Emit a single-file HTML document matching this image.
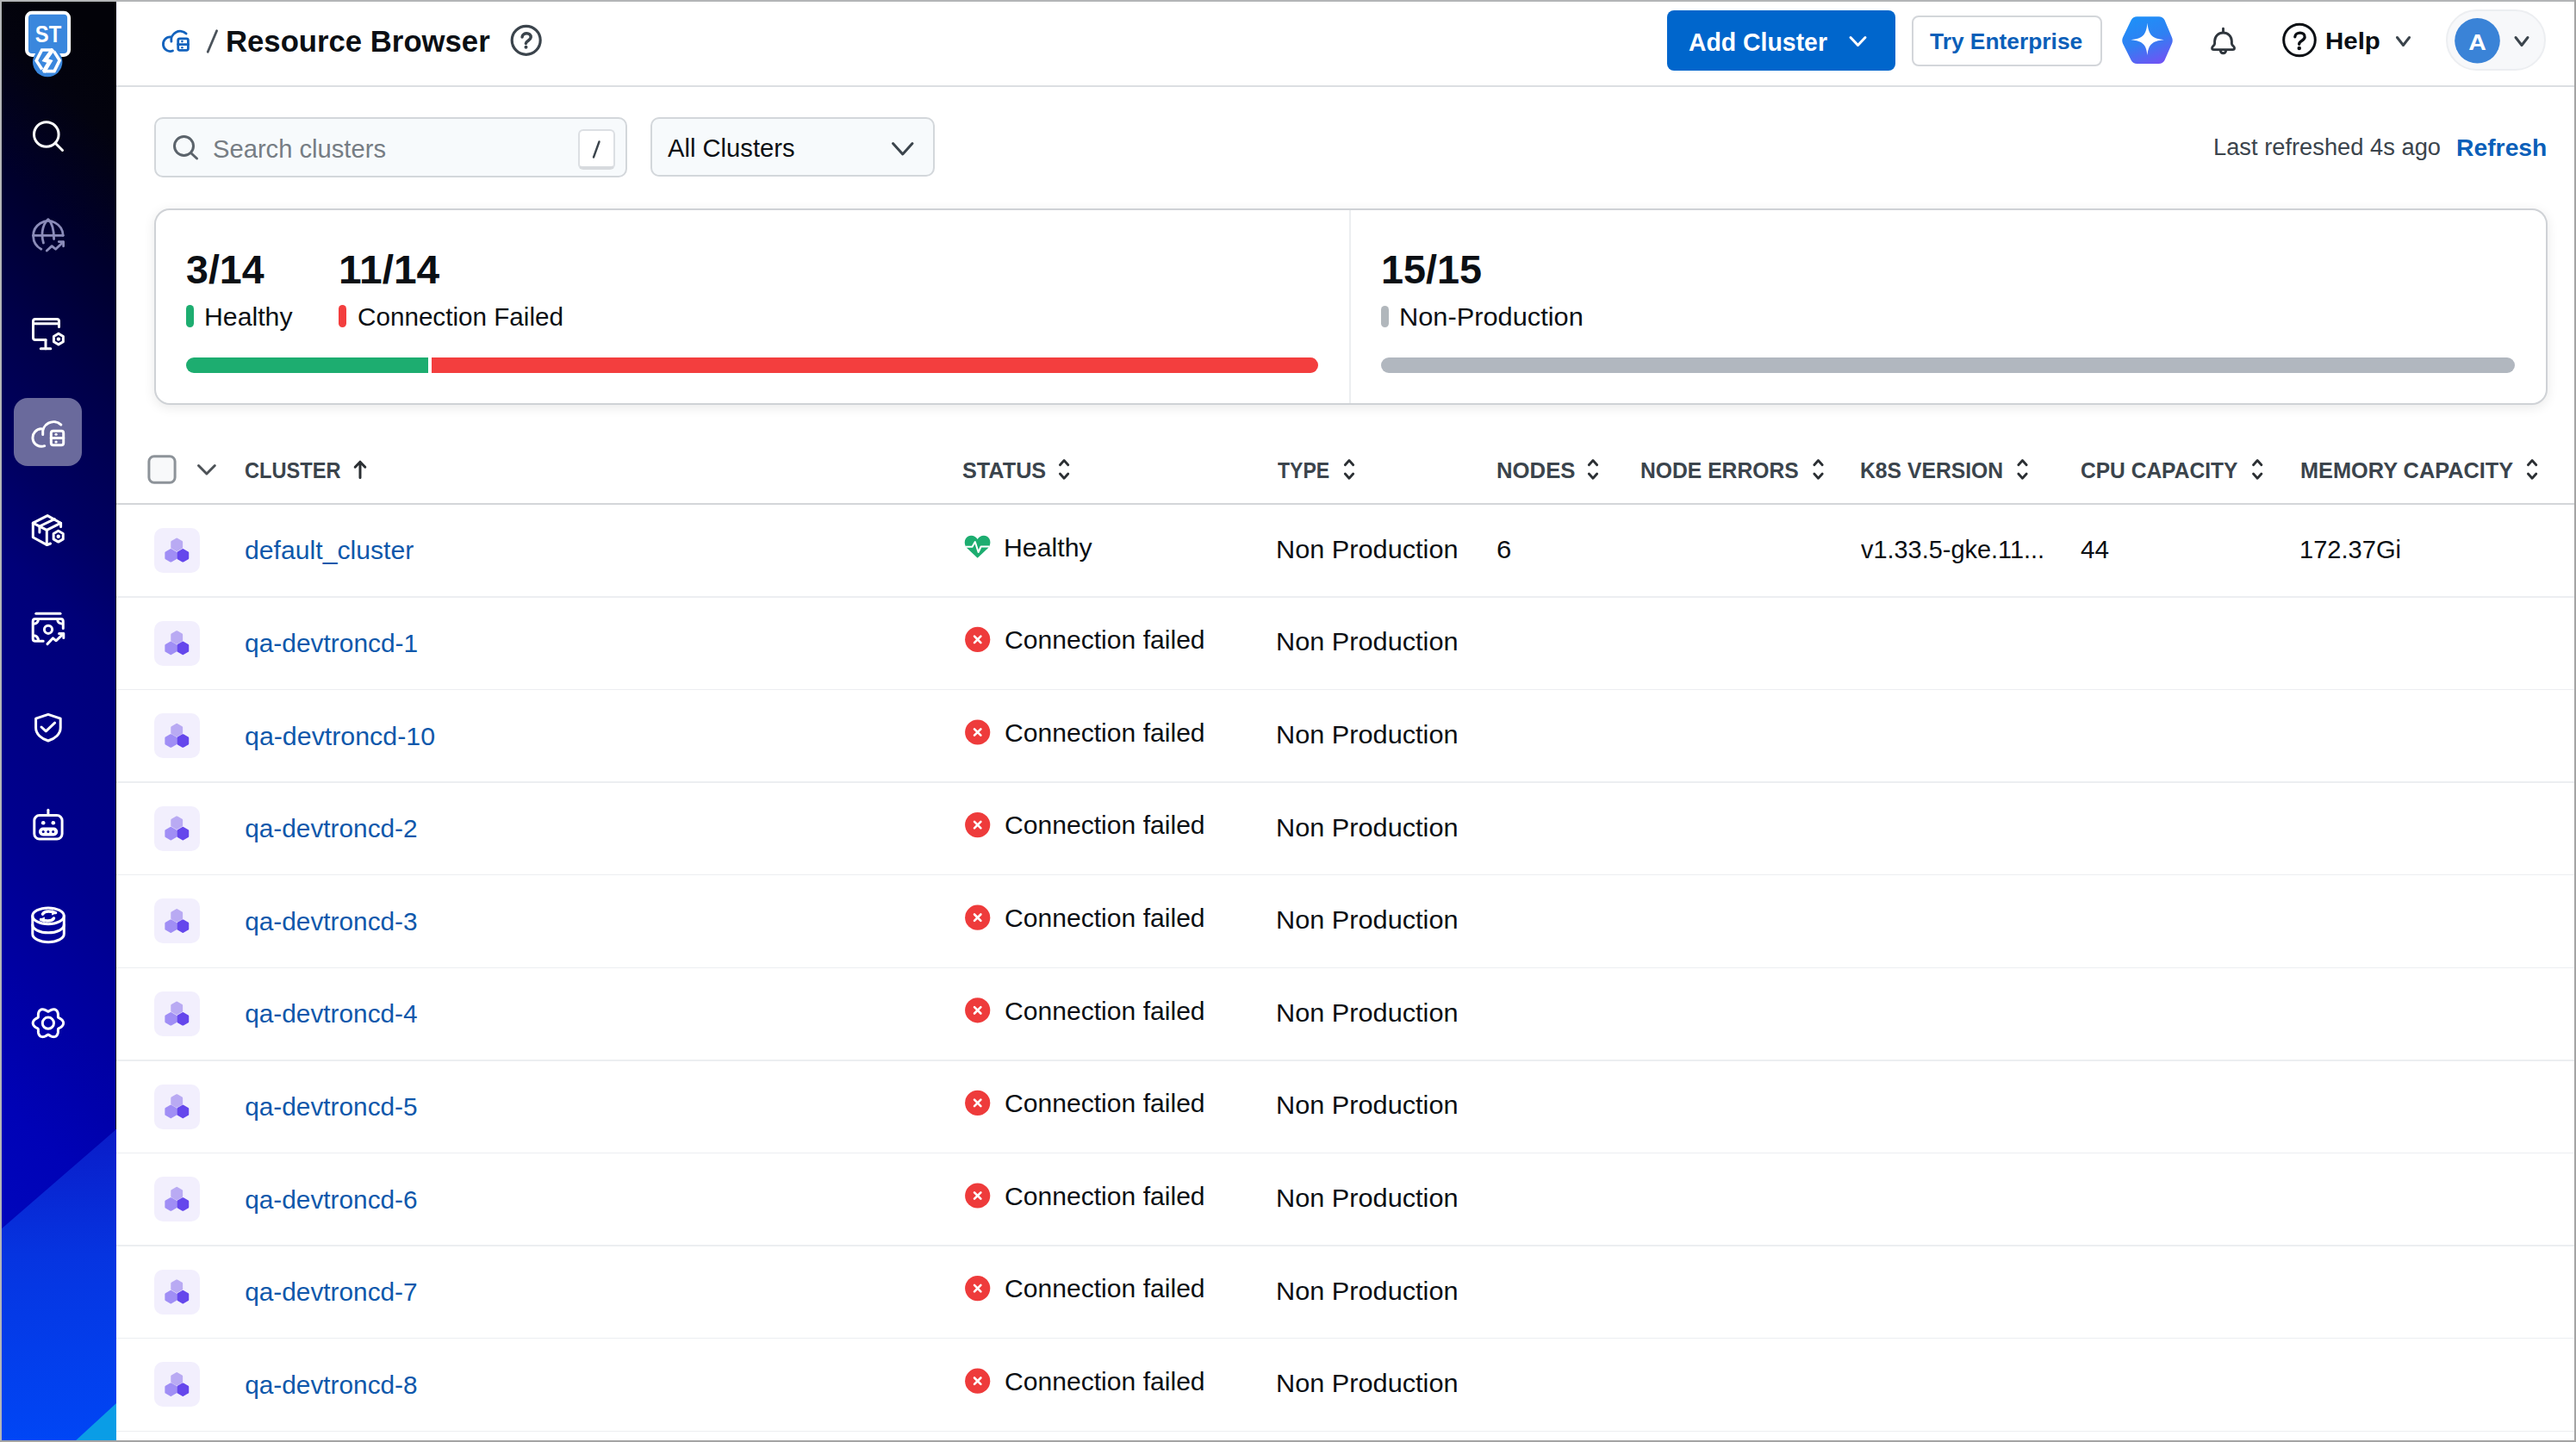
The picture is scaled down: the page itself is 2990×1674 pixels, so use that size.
<!DOCTYPE html>
<html><head><meta charset="utf-8"><title>Resource Browser</title><style>
html,body{margin:0;padding:0;}
body{width:2990px;height:1674px;overflow:hidden;background:#fff;position:relative;font-family:"Liberation Sans",sans-serif;}
.t{position:absolute;white-space:nowrap;line-height:1;transform-origin:0 0;}
.b{position:absolute;box-sizing:border-box;}
svg.ov{position:absolute;left:0;top:0;}
</style></head><body>
<div class="b" style="left:135px;top:0px;width:2855px;height:99px;background:#fff"></div>
<div class="b" style="left:135px;top:99px;width:2855px;height:2px;background:#dcdfe2"></div>
<div class="t" style="left:262.04px;top:31.23px;font-size:35.4px;color:#0b0f14;font-weight:bold;transform:scaleX(0.9806);">Resource Browser</div>
<div class="b" style="left:1935px;top:12px;width:265px;height:70px;background:#0066cc;border-radius:8px"></div>
<div class="t" style="left:1960.05px;top:33.60px;font-size:30px;color:#ffffff;font-weight:bold;transform:scaleX(0.9467);">Add Cluster</div>
<div class="b" style="left:2219px;top:18px;width:221px;height:59px;background:#fff;border:2px solid #d3d6da;border-radius:8px"></div>
<div class="t" style="left:2240.00px;top:34.56px;font-size:26.5px;color:#0b5fb9;font-weight:bold;transform:scaleX(0.9944);">Try Enterprise</div>
<div class="t" style="left:2698.93px;top:33.47px;font-size:28.5px;color:#0b0f14;font-weight:bold;transform:scaleX(1.0339);">Help</div>
<div class="b" style="left:2839px;top:11px;width:116px;height:71px;background:#f7f8fa;border:2px solid #eceef1;border-radius:36px"></div>
<div class="b" style="left:179px;top:136px;width:549px;height:70px;background:#f7fafc;border:2px solid #d3d7db;border-radius:10px"></div>
<div class="t" style="left:246.72px;top:157.75px;font-size:29.7px;color:#767d84;transform:scaleX(0.9823);">Search clusters</div>
<div class="b" style="left:671px;top:150px;width:43px;height:47px;background:#fff;border:2px solid #dcdfe3;border-bottom:4px solid #d7dade;border-radius:6px"></div>
<div class="b" style="left:755px;top:136px;width:330px;height:69px;background:#f7fafc;border:2px solid #d3d7db;border-radius:10px"></div>
<div class="t" style="left:775.00px;top:156.55px;font-size:29.7px;color:#0b0f14;transform:scaleX(0.9826);">All Clusters</div>
<div class="t" style="left:2568.58px;top:158.14px;font-size:27px;color:#3b444c;transform:scaleX(1.0109);">Last refreshed 4s ago</div>
<div class="t" style="left:2850.71px;top:157.37px;font-size:28.5px;color:#0b5fb9;font-weight:bold;transform:scaleX(0.9932);">Refresh</div>
<div class="b" style="left:179px;top:242px;width:2778px;height:228px;background:#fff;border:2px solid #cfd2d6;border-radius:18px;box-shadow:0 3px 14px rgba(0,0,0,0.09)"></div>
<div class="b" style="left:1566px;top:244px;width:2px;height:224px;background:#eceef0"></div>
<div class="t" style="left:215.98px;top:290.88px;font-size:45.5px;color:#0b0f14;font-weight:bold;transform:scaleX(1.0227);">3/14</div>
<div class="t" style="left:392.54px;top:290.88px;font-size:45.5px;color:#0b0f14;font-weight:bold;transform:scaleX(1.0528);">11/14</div>
<div class="t" style="left:1602.52px;top:290.78px;font-size:45.5px;color:#0b0f14;font-weight:bold;transform:scaleX(1.0282);">15/15</div>
<div class="b" style="left:216px;top:354px;width:9px;height:26px;background:#1dad70;border-radius:5px"></div>
<div class="b" style="left:393px;top:354px;width:9px;height:26px;background:#f33e3e;border-radius:5px"></div>
<div class="b" style="left:1603px;top:355px;width:9px;height:25px;background:#b1b7bc;border-radius:5px"></div>
<div class="t" style="left:236.98px;top:353.30px;font-size:30px;color:#0b0f14;transform:scaleX(1.0080);">Healthy</div>
<div class="t" style="left:414.81px;top:353.30px;font-size:30px;color:#0b0f14;transform:scaleX(0.9883);">Connection Failed</div>
<div class="t" style="left:1623.95px;top:352.80px;font-size:30px;color:#0b0f14;transform:scaleX(1.0259);">Non-Production</div>
<div class="b" style="left:216px;top:415px;width:281px;height:18px;background:#1dad70;border-radius:9px 0 0 9px"></div>
<div class="b" style="left:501px;top:415px;width:1029px;height:18px;background:#f33e3e;border-radius:0 9px 9px 0"></div>
<div class="b" style="left:1603px;top:415px;width:1316px;height:18px;background:#b1b7bf;border-radius:9px"></div>
<div class="t" style="left:284.27px;top:533.81px;font-size:25.5px;color:#3b444c;font-weight:bold;transform:scaleX(0.9261);">CLUSTER</div>
<div class="t" style="left:1116.51px;top:533.81px;font-size:25.5px;color:#3b444c;font-weight:bold;transform:scaleX(0.9896);">STATUS</div>
<div class="t" style="left:1483.30px;top:533.81px;font-size:25.5px;color:#3b444c;font-weight:bold;transform:scaleX(0.9045);">TYPE</div>
<div class="t" style="left:1736.68px;top:533.81px;font-size:25.5px;color:#3b444c;font-weight:bold;transform:scaleX(1.0091);">NODES</div>
<div class="t" style="left:1903.97px;top:533.81px;font-size:25.5px;color:#3b444c;font-weight:bold;transform:scaleX(0.9674);">NODE ERRORS</div>
<div class="t" style="left:2159.06px;top:533.81px;font-size:25.5px;color:#3b444c;font-weight:bold;transform:scaleX(0.9690);">K8S VERSION</div>
<div class="t" style="left:2415.44px;top:533.81px;font-size:25.5px;color:#3b444c;font-weight:bold;transform:scaleX(0.9628);">CPU CAPACITY</div>
<div class="t" style="left:2669.91px;top:533.81px;font-size:25.5px;color:#3b444c;font-weight:bold;transform:scaleX(0.9931);">MEMORY CAPACITY</div>
<div class="b" style="left:135px;top:584px;width:2853px;height:2px;background:#d3d6d9"></div>
<div class="b" style="left:135px;top:692.1px;width:2853px;height:1.5px;background:#eceef1"></div>
<div class="b" style="left:179px;top:613.0px;width:52.599999999999994px;height:52.0px;background:#f2effd;border-radius:10px"></div>
<div class="t" style="left:284.19px;top:624.37px;font-size:29.8px;color:#0e58ab;transform:scaleX(1.0130);">default_cluster</div>
<div class="t" style="left:1164.78px;top:621.20px;font-size:30px;color:#0b0f14;transform:scaleX(1.0090);">Healthy</div>
<div class="t" style="left:1481.42px;top:622.82px;font-size:29.5px;color:#0b0f14;transform:scaleX(1.0405);">Non Production</div>
<div class="t" style="left:1736.94px;top:622.52px;font-size:29.5px;color:#0b0f14;transform:scaleX(1.0571);">6</div>
<div class="t" style="left:2160.20px;top:622.52px;font-size:29.5px;color:#0b0f14;transform:scaleX(0.9795);">v1.33.5-gke.11...</div>
<div class="t" style="left:2414.99px;top:622.52px;font-size:29.5px;color:#0b0f14;transform:scaleX(1.0065);">44</div>
<div class="t" style="left:2669.43px;top:622.52px;font-size:29.5px;color:#0b0f14;transform:scaleX(0.9853);">172.37Gi</div>
<div class="b" style="left:135px;top:799.7px;width:2853px;height:1.5px;background:#eceef1"></div>
<div class="b" style="left:179px;top:720.6px;width:52.599999999999994px;height:52.0px;background:#f2effd;border-radius:10px"></div>
<div class="t" style="left:284.20px;top:731.97px;font-size:29.8px;color:#0e58ab;transform:scaleX(1.0040);">qa-devtroncd-1</div>
<div class="t" style="left:1166.28px;top:728.22px;font-size:29.5px;color:#0b0f14;transform:scaleX(1.0204);">Connection failed</div>
<div class="t" style="left:1481.42px;top:730.32px;font-size:29.5px;color:#0b0f14;transform:scaleX(1.0405);">Non Production</div>
<div class="b" style="left:135px;top:907.3px;width:2853px;height:1.5px;background:#eceef1"></div>
<div class="b" style="left:179px;top:828.2px;width:52.599999999999994px;height:52.0px;background:#f2effd;border-radius:10px"></div>
<div class="t" style="left:284.18px;top:839.57px;font-size:29.8px;color:#0e58ab;transform:scaleX(1.0186);">qa-devtroncd-10</div>
<div class="t" style="left:1166.28px;top:835.82px;font-size:29.5px;color:#0b0f14;transform:scaleX(1.0204);">Connection failed</div>
<div class="t" style="left:1481.42px;top:837.92px;font-size:29.5px;color:#0b0f14;transform:scaleX(1.0405);">Non Production</div>
<div class="b" style="left:135px;top:1014.9px;width:2853px;height:1.5px;background:#eceef1"></div>
<div class="b" style="left:179px;top:935.8px;width:52.599999999999994px;height:52.0px;background:#f2effd;border-radius:10px"></div>
<div class="t" style="left:284.20px;top:947.17px;font-size:29.8px;color:#0e58ab;">qa-devtroncd-2</div>
<div class="t" style="left:1166.28px;top:943.42px;font-size:29.5px;color:#0b0f14;transform:scaleX(1.0204);">Connection failed</div>
<div class="t" style="left:1481.42px;top:945.52px;font-size:29.5px;color:#0b0f14;transform:scaleX(1.0405);">Non Production</div>
<div class="b" style="left:135px;top:1122.5px;width:2853px;height:1.5px;background:#eceef1"></div>
<div class="b" style="left:179px;top:1043.4px;width:52.599999999999994px;height:52.0px;background:#f2effd;border-radius:10px"></div>
<div class="t" style="left:284.20px;top:1054.77px;font-size:29.8px;color:#0e58ab;">qa-devtroncd-3</div>
<div class="t" style="left:1166.28px;top:1051.02px;font-size:29.5px;color:#0b0f14;transform:scaleX(1.0204);">Connection failed</div>
<div class="t" style="left:1481.42px;top:1053.12px;font-size:29.5px;color:#0b0f14;transform:scaleX(1.0405);">Non Production</div>
<div class="b" style="left:135px;top:1230.1px;width:2853px;height:1.5px;background:#eceef1"></div>
<div class="b" style="left:179px;top:1151.0px;width:52.599999999999994px;height:52.0px;background:#f2effd;border-radius:10px"></div>
<div class="t" style="left:284.20px;top:1162.37px;font-size:29.8px;color:#0e58ab;">qa-devtroncd-4</div>
<div class="t" style="left:1166.28px;top:1158.62px;font-size:29.5px;color:#0b0f14;transform:scaleX(1.0204);">Connection failed</div>
<div class="t" style="left:1481.42px;top:1160.72px;font-size:29.5px;color:#0b0f14;transform:scaleX(1.0405);">Non Production</div>
<div class="b" style="left:135px;top:1337.7px;width:2853px;height:1.5px;background:#eceef1"></div>
<div class="b" style="left:179px;top:1258.6px;width:52.599999999999994px;height:52.0px;background:#f2effd;border-radius:10px"></div>
<div class="t" style="left:284.20px;top:1269.97px;font-size:29.8px;color:#0e58ab;">qa-devtroncd-5</div>
<div class="t" style="left:1166.28px;top:1266.22px;font-size:29.5px;color:#0b0f14;transform:scaleX(1.0204);">Connection failed</div>
<div class="t" style="left:1481.42px;top:1268.32px;font-size:29.5px;color:#0b0f14;transform:scaleX(1.0405);">Non Production</div>
<div class="b" style="left:135px;top:1445.3px;width:2853px;height:1.5px;background:#eceef1"></div>
<div class="b" style="left:179px;top:1366.2px;width:52.599999999999994px;height:52.0px;background:#f2effd;border-radius:10px"></div>
<div class="t" style="left:284.20px;top:1377.57px;font-size:29.8px;color:#0e58ab;">qa-devtroncd-6</div>
<div class="t" style="left:1166.28px;top:1373.82px;font-size:29.5px;color:#0b0f14;transform:scaleX(1.0204);">Connection failed</div>
<div class="t" style="left:1481.42px;top:1375.92px;font-size:29.5px;color:#0b0f14;transform:scaleX(1.0405);">Non Production</div>
<div class="b" style="left:135px;top:1552.9px;width:2853px;height:1.5px;background:#eceef1"></div>
<div class="b" style="left:179px;top:1473.8px;width:52.599999999999994px;height:52.0px;background:#f2effd;border-radius:10px"></div>
<div class="t" style="left:284.20px;top:1485.17px;font-size:29.8px;color:#0e58ab;">qa-devtroncd-7</div>
<div class="t" style="left:1166.28px;top:1481.42px;font-size:29.5px;color:#0b0f14;transform:scaleX(1.0204);">Connection failed</div>
<div class="t" style="left:1481.42px;top:1483.52px;font-size:29.5px;color:#0b0f14;transform:scaleX(1.0405);">Non Production</div>
<div class="b" style="left:135px;top:1660.5px;width:2853px;height:1.5px;background:#eceef1"></div>
<div class="b" style="left:179px;top:1581.4px;width:52.599999999999994px;height:52.0px;background:#f2effd;border-radius:10px"></div>
<div class="t" style="left:284.20px;top:1592.77px;font-size:29.8px;color:#0e58ab;">qa-devtroncd-8</div>
<div class="t" style="left:1166.28px;top:1589.02px;font-size:29.5px;color:#0b0f14;transform:scaleX(1.0204);">Connection failed</div>
<div class="t" style="left:1481.42px;top:1591.12px;font-size:29.5px;color:#0b0f14;transform:scaleX(1.0405);">Non Production</div>
<svg class="ov" width="2990" height="1674" viewBox="0 0 2990 1674"><defs><linearGradient id="sbg" gradientUnits="userSpaceOnUse" x1="0" y1="-60" x2="0" y2="1614" gradientTransform="skewY(42)"><stop offset="0" stop-color="#020208"/><stop offset="0.06" stop-color="#03030f"/><stop offset="0.15" stop-color="#00002c"/><stop offset="0.25" stop-color="#00004a"/><stop offset="0.35" stop-color="#000062"/><stop offset="0.42" stop-color="#000078"/><stop offset="0.6" stop-color="#00008e"/><stop offset="0.7" stop-color="#0000a2"/><stop offset="0.8" stop-color="#0002b6"/><stop offset="1" stop-color="#000cc4"/></linearGradient><linearGradient id="band" x1="0" y1="0" x2="0" y2="1"><stop offset="0" stop-color="#0a1cc8"/><stop offset="0.4" stop-color="#0634e0"/><stop offset="1" stop-color="#0046f5"/></linearGradient><linearGradient id="aig" x1="0.3" y1="0" x2="0.7" y2="1"><stop offset="0" stop-color="#1e90f8"/><stop offset="0.5" stop-color="#2f80f2"/><stop offset="1" stop-color="#6f54f4"/></linearGradient></defs><rect x="0" y="0" width="135" height="1674" fill="url(#sbg)"/><polygon points="0,1428 135,1311 135,1674 0,1674" fill="url(#band)"/><polygon points="86,1674 135,1629 135,1674" fill="#0a9de6"/><rect x="31" y="14.8" width="49.1" height="49.1" rx="6" fill="#3a87dd" stroke="#fff" stroke-width="4"/><text x="0" y="49" font-family="Liberation Sans" font-weight="bold" font-size="28" fill="#fff" text-anchor="middle" transform="translate(56,0) scale(0.85,1)">ST</text><circle cx="55.2" cy="72" r="17.2" fill="#3a87dd"/><g fill="none" stroke="#fff" stroke-width="3.6" stroke-linejoin="miter" stroke-linecap="butt"><path d="M61.5,58 L48.6,58 L42.2,70.4 L48.8,80.6"/><path d="M49.8,82.6 L63,82.6 L69.2,70 L62.6,59.6"/></g><path d="M61.5,57.2 L52.4,69.7 L57.9,71.4 L50.6,83.4" fill="none" stroke="#fff" stroke-width="4.8" stroke-linejoin="miter"/><g fill="none" stroke="#fff" stroke-width="3" stroke-linecap="round" stroke-linejoin="round"><circle cx="53.8" cy="156" r="14.3"/><path d="M64.5,166.5 L72.5,174.5"/></g><g fill="none" stroke="#8b8cb9" stroke-width="2.8" stroke-linecap="round" stroke-linejoin="round"><path d="M47.8,289.2 A17.3,17.3 0 1 1 73.2,273.3"/><path d="M38.6,273.3 L73.2,273.3"/><path d="M50.4,282 C48,274 48,262 55.9,254.6 C61,259 62.6,266 62.6,277.6"/><path d="M54.3,291 L60.2,285.6 L64.6,289.3 L73.3,281"/><path d="M68.3,280.6 L73.6,280.6 L73.6,285.8"/></g><g fill="none" stroke="#fff" stroke-width="3" stroke-linecap="round" stroke-linejoin="round"><path d="M53,394.4 L41,394.4 Q38.5,394.4 38.5,391.9 L38.5,373 Q38.5,370.5 41,370.5 L66,370.5 Q68.5,370.5 68.5,373 L68.5,379.5"/><path d="M38.5,375.8 L68.5,375.8"/><path d="M53,394.4 L53,404.8"/><path d="M47.3,404.8 L58.8,404.8"/><path d="M67.90,387.30 L73.36,390.45 L73.36,396.75 L67.90,399.90 L62.44,396.75 L62.44,390.45 Z"/></g><circle cx="67.9" cy="393.6" r="2.2" fill="#fff"/><rect x="16" y="462" width="79" height="79" rx="16" fill="#6a6a9c"/><g fill="none" stroke="#fff" stroke-width="3" stroke-linecap="round" stroke-linejoin="round"><path d="M51.69,517.68 A10.21,10.21 0 1 1 48.62,497.88"/><path d="M49.72,504.40 A12.67,12.67 0 0 1 70.88,493.08"/><rect x="59.32" y="500.22" width="14.39" height="16.61" rx="2.46"/><path d="M59.32,508.52 L73.71,508.52"/></g><g fill="#fff"><circle cx="65.10" cy="504.27" r="1.60"/><circle cx="65.10" cy="513.01" r="1.60"/></g><g fill="none" stroke="#fff" stroke-width="3" stroke-linecap="round" stroke-linejoin="round"><path d="M70.6,611.5 L70.6,607.2 L55.1,598.6 L38.3,607.2 L38.3,623.8 L54.6,632.6 L58.5,631"/><path d="M38.3,607.2 L54.3,615.3 L70.6,607.2"/><path d="M54.3,615.3 L54.3,632.6"/><path d="M45.9,618 L45.9,611 L63.3,602.6"/><path d="M67.70,616.30 L73.24,619.50 L73.24,625.90 L67.70,629.10 L62.16,625.90 L62.16,619.50 Z"/></g><circle cx="67.7" cy="622.7" r="2.2" fill="#fff"/><g fill="none" stroke="#fff" stroke-width="3" stroke-linecap="round" stroke-linejoin="round"><path d="M41.8,712.2 L70,712.2"/><path d="M50.2,744.2 L41,744.2 Q38.2,744.2 38.2,741.4 L38.2,721.3 Q38.2,718.5 41,718.5 L70.5,718.5 Q73.3,718.5 73.3,721.3 L73.3,729.5"/><circle cx="56" cy="730.8" r="4.6"/><path d="M38.8,724.3 Q44.2,724 44.5,719 M66.6,719 Q67,724 72.7,724.3 M38.8,737.7 Q44.2,738 44.5,743.6"/><path d="M55,747.6 L61.5,740.8 L65.2,743.8 L73.6,735.6"/><path d="M68.6,735.4 L73.8,735.4 L73.8,740.6"/></g><g fill="none" stroke="#fff" stroke-width="3" stroke-linecap="round" stroke-linejoin="round"><path d="M55.9,829.4 L70.2,834.2 L70.2,845 C70.2,852 64,857.5 55.9,860 C47.8,857.5 41.6,852 41.6,845 L41.6,834.2 Z"/><path d="M48,844 L53.3,848.8 L63.6,839.2"/></g><g fill="none" stroke="#fff" stroke-width="3" stroke-linecap="round" stroke-linejoin="round"><path d="M55.9,940.3 L55.9,945.8"/><rect x="39.8" y="946.6" width="32.3" height="27.4" rx="6"/></g><g fill="#fff"><circle cx="50.2" cy="955.3" r="2.3"/><circle cx="61.8" cy="955.3" r="2.3"/><rect x="45" y="960.5" width="22.2" height="9.9" rx="4.95"/></g><g fill="#000090"><circle cx="50.2" cy="965.4" r="1.5"/><circle cx="55.9" cy="965.4" r="1.5"/><circle cx="61.6" cy="965.4" r="1.5"/></g><g fill="none" stroke="#fff" stroke-width="3" stroke-linecap="round" stroke-linejoin="round"><ellipse cx="56" cy="1063.3" rx="18.25" ry="9.4"/><path d="M37.8,1063.3 L37.8,1084.3 A18.25,9.4 0 0 0 74.3,1084.3 L74.3,1063.3"/><path d="M37.8,1073.4 A18.25,9.4 0 0 0 74.3,1073.4"/></g><g fill="none" stroke="#fff" stroke-width="3.4" stroke-linecap="round"><path d="M49.5,1061.2 C51,1058.6 55,1057.6 59,1058.2 L64.5,1059.6"/><path d="M62.5,1066 C61,1068.4 57,1069.4 53,1068.8 L47.6,1067.6"/></g><g fill="#fff"><path d="M60.5,1056 L66.6,1060 L60,1062.4 Z"/><path d="M51.5,1071.2 L45.5,1067.2 L52,1064.6 Z"/></g><g fill="none" stroke="#fff" stroke-width="3" stroke-linecap="round" stroke-linejoin="round"><path d="M73.60,1187.70 L73.50,1188.62 L73.21,1189.52 L72.75,1190.37 L72.13,1191.15 L71.40,1191.85 L70.59,1192.47 L69.74,1193.01 L68.90,1193.49 L68.12,1193.93 L67.50,1194.40 L67.41,1195.17 L67.41,1196.06 L67.42,1197.03 L67.38,1198.03 L67.25,1199.05 L67.00,1200.03 L66.64,1200.96 L66.13,1201.78 L65.50,1202.48 L64.75,1203.03 L63.90,1203.40 L62.98,1203.60 L62.01,1203.63 L61.03,1203.48 L60.05,1203.20 L59.11,1202.81 L58.22,1202.34 L57.39,1201.85 L56.62,1201.40 L55.90,1201.10 L55.18,1201.40 L54.41,1201.85 L53.58,1202.34 L52.69,1202.81 L51.75,1203.20 L50.77,1203.48 L49.79,1203.63 L48.82,1203.60 L47.90,1203.40 L47.05,1203.03 L46.30,1202.48 L45.67,1201.78 L45.16,1200.96 L44.80,1200.03 L44.55,1199.05 L44.42,1198.03 L44.38,1197.03 L44.39,1196.06 L44.39,1195.17 L44.30,1194.40 L43.68,1193.93 L42.90,1193.49 L42.06,1193.01 L41.21,1192.47 L40.40,1191.85 L39.67,1191.15 L39.05,1190.37 L38.59,1189.52 L38.30,1188.62 L38.20,1187.70 L38.30,1186.78 L38.59,1185.88 L39.05,1185.03 L39.67,1184.25 L40.40,1183.55 L41.21,1182.93 L42.06,1182.39 L42.90,1181.91 L43.68,1181.47 L44.30,1181.00 L44.39,1180.23 L44.39,1179.34 L44.38,1178.37 L44.42,1177.37 L44.55,1176.35 L44.80,1175.37 L45.16,1174.44 L45.67,1173.62 L46.30,1172.92 L47.05,1172.37 L47.90,1172.00 L48.82,1171.80 L49.79,1171.77 L50.77,1171.92 L51.75,1172.20 L52.69,1172.59 L53.58,1173.06 L54.41,1173.55 L55.18,1174.00 L55.90,1174.30 L56.62,1174.00 L57.39,1173.55 L58.22,1173.06 L59.11,1172.59 L60.05,1172.20 L61.03,1171.92 L62.01,1171.77 L62.98,1171.80 L63.90,1172.00 L64.75,1172.37 L65.50,1172.92 L66.13,1173.62 L66.64,1174.44 L67.00,1175.37 L67.25,1176.35 L67.38,1177.37 L67.42,1178.37 L67.41,1179.34 L67.41,1180.23 L67.50,1181.00 L68.12,1181.47 L68.90,1181.91 L69.74,1182.39 L70.59,1182.93 L71.40,1183.55 L72.13,1184.25 L72.75,1185.03 L73.21,1185.88 L73.50,1186.78 L73.60,1187.70 Z"/><circle cx="55.9" cy="1187.7" r="6.6"/></g><g fill="none" stroke="#1262bd" stroke-width="2.8" stroke-linecap="round" stroke-linejoin="round"><path d="M200.50,59.00 A8.30,8.30 0 1 1 198.00,42.90"/><path d="M198.90,48.20 A10.30,10.30 0 0 1 216.10,39.00"/><rect x="206.70" y="44.80" width="11.70" height="13.50" rx="2.00"/><path d="M206.70,51.55 L218.40,51.55"/></g><g fill="#1262bd"><circle cx="211.40" cy="48.10" r="1.30"/><circle cx="211.40" cy="55.20" r="1.30"/></g><path d="M241.2,60.3 L251.6,35.8" stroke="#4b535b" stroke-width="2.8" stroke-linecap="round"/><circle cx="610.7" cy="46.8" r="16.5" fill="none" stroke="#3b444c" stroke-width="3.2"/><path d="M606.08,43.02 C606.29,37.56 616.58,37.14 616.16,43.44 C615.95,47.01 610.38,47.43 610.38,50.58" fill="none" stroke="#3b444c" stroke-width="3.5" stroke-linecap="round"/><circle cx="610.49" cy="54.78" r="1.99" fill="#3b444c"/><path d="M2148,43.5 L2156.5,52.5 L2165,43.5" fill="none" stroke="#fff" stroke-width="3" stroke-linecap="round" stroke-linejoin="round"/><path d="M2480.5,19.3 L2505.7,19.3 Q2510.3,19.3 2512.5,23.3 L2520.8,43 Q2522.7,47 2520.8,51 L2512.5,69.9 Q2510.3,73.9 2505.7,73.9 L2480.5,73.9 Q2475.9,73.9 2473.7,69.9 L2464.2,51 Q2462.3,47 2464.2,43 L2473.7,23.3 Q2475.9,19.3 2480.5,19.3 Z" fill="url(#aig)"/><path d="M2492.5,26.6 C2493.8,40 2497.5,45 2511.8,46.2 C2497.5,47.5 2493.8,52 2492.5,64 C2491.2,52 2487.5,47.5 2473.4,46.2 C2487.5,45 2491.2,40 2492.5,26.6 Z" fill="#fff"/><g fill="none" stroke="#2f363d" stroke-width="2.9" stroke-linecap="round" stroke-linejoin="round"><path d="M2580.5,33.2 L2580.5,37"/><path d="M2570.6,50.5 L2570.6,47.8 A9.9,9.9 0 0 1 2590.4,47.8 L2590.4,50.5 C2590.4,53 2593.5,53.5 2593.5,55.8 C2593.5,57 2592.5,57.6 2591.5,57.6 L2569.5,57.6 C2568.5,57.6 2567.6,57 2567.6,55.8 C2567.6,53.5 2570.6,53 2570.6,50.5 Z"/><path d="M2577.3,58.6 A3.2,3.2 0 0 0 2583.7,58.6"/></g><circle cx="2669" cy="46.5" r="18.3" fill="none" stroke="#0b0f14" stroke-width="3"/><path d="M2663.81,42.75 C2664.04,36.62 2675.61,36.14 2675.14,43.22 C2674.90,47.24 2668.65,47.71 2668.65,51.25" fill="none" stroke="#0b0f14" stroke-width="3.3" stroke-linecap="round"/><circle cx="2668.76" cy="55.97" r="2.24" fill="#0b0f14"/><path d="M2782.5,43.5 L2789.5,52.5 L2796.5,43.5" fill="none" stroke="#3b444c" stroke-width="3" stroke-linecap="round" stroke-linejoin="round"/><circle cx="2875.5" cy="47.3" r="26.3" fill="#3a83d7"/><text x="0" y="57.6" font-family="Liberation Sans" font-size="25.5" font-weight="bold" fill="#fff" text-anchor="middle" transform="translate(2875.5,0) scale(1.12,1)">A</text><path d="M2920,43.5 L2927.0,52.5 L2934,43.5" fill="none" stroke="#3b444c" stroke-width="3" stroke-linecap="round" stroke-linejoin="round"/><g fill="none" stroke="#5b636b" stroke-width="3" stroke-linecap="round"><circle cx="213.5" cy="169.5" r="11"/><path d="M221.5,177.5 L228.5,184"/></g><path d="M689,182.5 L695.5,164.5" stroke="#3b444c" stroke-width="2.4" stroke-linecap="round"/><path d="M1036.5,166.5 L1047.75,179 L1059,166.5" fill="none" stroke="#3b444c" stroke-width="3" stroke-linecap="round" stroke-linejoin="round"/><rect x="172.9" y="529.7" width="30.2" height="30.5" rx="6" fill="#f8f9fa" stroke="#8d9399" stroke-width="3"/><path d="M230.5,540.5 L239.9,550 L249.3,540.5" fill="none" stroke="#4d5257" stroke-width="3" stroke-linecap="round" stroke-linejoin="round"/><g fill="none" stroke="#2b2f33" stroke-width="3" stroke-linecap="round" stroke-linejoin="round"><path d="M418,554.5 L418,536.5 M412.2,542.2 L418,536.2 L423.8,542.2"/></g><path d="M1230.3999999999999,539.7 L1235.1,534.5 L1239.8,539.7 M1230.3999999999999,550 L1235.1,555.3 L1239.8,550" fill="none" stroke="#2b2f33" stroke-width="2.8" stroke-linecap="round" stroke-linejoin="round"/><path d="M1561.3,539.7 L1566.0,534.5 L1570.7,539.7 M1561.3,550 L1566.0,555.3 L1570.7,550" fill="none" stroke="#2b2f33" stroke-width="2.8" stroke-linecap="round" stroke-linejoin="round"/><path d="M1844.3,539.7 L1849.0,534.5 L1853.7,539.7 M1844.3,550 L1849.0,555.3 L1853.7,550" fill="none" stroke="#2b2f33" stroke-width="2.8" stroke-linecap="round" stroke-linejoin="round"/><path d="M2105.8,539.7 L2110.5,534.5 L2115.2,539.7 M2105.8,550 L2110.5,555.3 L2115.2,550" fill="none" stroke="#2b2f33" stroke-width="2.8" stroke-linecap="round" stroke-linejoin="round"/><path d="M2342.8,539.7 L2347.5,534.5 L2352.2,539.7 M2342.8,550 L2347.5,555.3 L2352.2,550" fill="none" stroke="#2b2f33" stroke-width="2.8" stroke-linecap="round" stroke-linejoin="round"/><path d="M2615.5,539.7 L2620.2,534.5 L2624.8999999999996,539.7 M2615.5,550 L2620.2,555.3 L2624.8999999999996,550" fill="none" stroke="#2b2f33" stroke-width="2.8" stroke-linecap="round" stroke-linejoin="round"/><path d="M2934.4,539.7 L2939.1,534.5 L2943.7999999999997,539.7 M2934.4,550 L2939.1,555.3 L2943.7999999999997,550" fill="none" stroke="#2b2f33" stroke-width="2.8" stroke-linecap="round" stroke-linejoin="round"/><path d="M205.20,625.90 L210.83,629.15 L210.83,635.65 L205.20,638.90 L199.57,635.65 L199.57,629.15 Z" fill="#b9aaf3" stroke="#b9aaf3" stroke-width="2.6" stroke-linejoin="round"/><path d="M198.30,638.30 L203.93,641.55 L203.93,648.05 L198.30,651.30 L192.67,648.05 L192.67,641.55 Z" fill="#a08ef5" stroke="#a08ef5" stroke-width="2.6" stroke-linejoin="round"/><path d="M212.30,638.30 L217.93,641.55 L217.93,648.05 L212.30,651.30 L206.67,648.05 L206.67,641.55 Z" fill="#6547ec" stroke="#6547ec" stroke-width="2.6" stroke-linejoin="round"/><path d="M1134.6,647.8 L1122.6,636.5 C1117.5,631.5 1119.5,622.0 1127,621.8 C1130.5,621.7 1133,623.5 1134.6,626.0 C1136.2,623.5 1138.7,621.7 1142.2,621.8 C1149.7,622.0 1151.7,631.5 1146.6,636.5 Z" fill="#1dad70"/><path d="M1121,634.7 L1128.5,634.7 L1131.8,629.0 L1135.6,641.0 L1138.6,634.5 L1148.2,634.5" fill="none" stroke="#fff" stroke-width="2" stroke-linejoin="round"/><path d="M205.20,733.50 L210.83,736.75 L210.83,743.25 L205.20,746.50 L199.57,743.25 L199.57,736.75 Z" fill="#b9aaf3" stroke="#b9aaf3" stroke-width="2.6" stroke-linejoin="round"/><path d="M198.30,745.90 L203.93,749.15 L203.93,755.65 L198.30,758.90 L192.67,755.65 L192.67,749.15 Z" fill="#a08ef5" stroke="#a08ef5" stroke-width="2.6" stroke-linejoin="round"/><path d="M212.30,745.90 L217.93,749.15 L217.93,755.65 L212.30,758.90 L206.67,755.65 L206.67,749.15 Z" fill="#6547ec" stroke="#6547ec" stroke-width="2.6" stroke-linejoin="round"/><circle cx="1134.7" cy="742.40" r="14.6" fill="#ee3b3b"/><path d="M1131,738.70 L1138.4,746.10 M1138.4,738.70 L1131,746.10" stroke="#fff" stroke-width="2.6" stroke-linecap="round"/><path d="M205.20,841.10 L210.83,844.35 L210.83,850.85 L205.20,854.10 L199.57,850.85 L199.57,844.35 Z" fill="#b9aaf3" stroke="#b9aaf3" stroke-width="2.6" stroke-linejoin="round"/><path d="M198.30,853.50 L203.93,856.75 L203.93,863.25 L198.30,866.50 L192.67,863.25 L192.67,856.75 Z" fill="#a08ef5" stroke="#a08ef5" stroke-width="2.6" stroke-linejoin="round"/><path d="M212.30,853.50 L217.93,856.75 L217.93,863.25 L212.30,866.50 L206.67,863.25 L206.67,856.75 Z" fill="#6547ec" stroke="#6547ec" stroke-width="2.6" stroke-linejoin="round"/><circle cx="1134.7" cy="850.00" r="14.6" fill="#ee3b3b"/><path d="M1131,846.30 L1138.4,853.70 M1138.4,846.30 L1131,853.70" stroke="#fff" stroke-width="2.6" stroke-linecap="round"/><path d="M205.20,948.70 L210.83,951.95 L210.83,958.45 L205.20,961.70 L199.57,958.45 L199.57,951.95 Z" fill="#b9aaf3" stroke="#b9aaf3" stroke-width="2.6" stroke-linejoin="round"/><path d="M198.30,961.10 L203.93,964.35 L203.93,970.85 L198.30,974.10 L192.67,970.85 L192.67,964.35 Z" fill="#a08ef5" stroke="#a08ef5" stroke-width="2.6" stroke-linejoin="round"/><path d="M212.30,961.10 L217.93,964.35 L217.93,970.85 L212.30,974.10 L206.67,970.85 L206.67,964.35 Z" fill="#6547ec" stroke="#6547ec" stroke-width="2.6" stroke-linejoin="round"/><circle cx="1134.7" cy="957.60" r="14.6" fill="#ee3b3b"/><path d="M1131,953.90 L1138.4,961.30 M1138.4,953.90 L1131,961.30" stroke="#fff" stroke-width="2.6" stroke-linecap="round"/><path d="M205.20,1056.30 L210.83,1059.55 L210.83,1066.05 L205.20,1069.30 L199.57,1066.05 L199.57,1059.55 Z" fill="#b9aaf3" stroke="#b9aaf3" stroke-width="2.6" stroke-linejoin="round"/><path d="M198.30,1068.70 L203.93,1071.95 L203.93,1078.45 L198.30,1081.70 L192.67,1078.45 L192.67,1071.95 Z" fill="#a08ef5" stroke="#a08ef5" stroke-width="2.6" stroke-linejoin="round"/><path d="M212.30,1068.70 L217.93,1071.95 L217.93,1078.45 L212.30,1081.70 L206.67,1078.45 L206.67,1071.95 Z" fill="#6547ec" stroke="#6547ec" stroke-width="2.6" stroke-linejoin="round"/><circle cx="1134.7" cy="1065.20" r="14.6" fill="#ee3b3b"/><path d="M1131,1061.50 L1138.4,1068.90 M1138.4,1061.50 L1131,1068.90" stroke="#fff" stroke-width="2.6" stroke-linecap="round"/><path d="M205.20,1163.90 L210.83,1167.15 L210.83,1173.65 L205.20,1176.90 L199.57,1173.65 L199.57,1167.15 Z" fill="#b9aaf3" stroke="#b9aaf3" stroke-width="2.6" stroke-linejoin="round"/><path d="M198.30,1176.30 L203.93,1179.55 L203.93,1186.05 L198.30,1189.30 L192.67,1186.05 L192.67,1179.55 Z" fill="#a08ef5" stroke="#a08ef5" stroke-width="2.6" stroke-linejoin="round"/><path d="M212.30,1176.30 L217.93,1179.55 L217.93,1186.05 L212.30,1189.30 L206.67,1186.05 L206.67,1179.55 Z" fill="#6547ec" stroke="#6547ec" stroke-width="2.6" stroke-linejoin="round"/><circle cx="1134.7" cy="1172.80" r="14.6" fill="#ee3b3b"/><path d="M1131,1169.10 L1138.4,1176.50 M1138.4,1169.10 L1131,1176.50" stroke="#fff" stroke-width="2.6" stroke-linecap="round"/><path d="M205.20,1271.50 L210.83,1274.75 L210.83,1281.25 L205.20,1284.50 L199.57,1281.25 L199.57,1274.75 Z" fill="#b9aaf3" stroke="#b9aaf3" stroke-width="2.6" stroke-linejoin="round"/><path d="M198.30,1283.90 L203.93,1287.15 L203.93,1293.65 L198.30,1296.90 L192.67,1293.65 L192.67,1287.15 Z" fill="#a08ef5" stroke="#a08ef5" stroke-width="2.6" stroke-linejoin="round"/><path d="M212.30,1283.90 L217.93,1287.15 L217.93,1293.65 L212.30,1296.90 L206.67,1293.65 L206.67,1287.15 Z" fill="#6547ec" stroke="#6547ec" stroke-width="2.6" stroke-linejoin="round"/><circle cx="1134.7" cy="1280.40" r="14.6" fill="#ee3b3b"/><path d="M1131,1276.70 L1138.4,1284.10 M1138.4,1276.70 L1131,1284.10" stroke="#fff" stroke-width="2.6" stroke-linecap="round"/><path d="M205.20,1379.10 L210.83,1382.35 L210.83,1388.85 L205.20,1392.10 L199.57,1388.85 L199.57,1382.35 Z" fill="#b9aaf3" stroke="#b9aaf3" stroke-width="2.6" stroke-linejoin="round"/><path d="M198.30,1391.50 L203.93,1394.75 L203.93,1401.25 L198.30,1404.50 L192.67,1401.25 L192.67,1394.75 Z" fill="#a08ef5" stroke="#a08ef5" stroke-width="2.6" stroke-linejoin="round"/><path d="M212.30,1391.50 L217.93,1394.75 L217.93,1401.25 L212.30,1404.50 L206.67,1401.25 L206.67,1394.75 Z" fill="#6547ec" stroke="#6547ec" stroke-width="2.6" stroke-linejoin="round"/><circle cx="1134.7" cy="1388.00" r="14.6" fill="#ee3b3b"/><path d="M1131,1384.30 L1138.4,1391.70 M1138.4,1384.30 L1131,1391.70" stroke="#fff" stroke-width="2.6" stroke-linecap="round"/><path d="M205.20,1486.70 L210.83,1489.95 L210.83,1496.45 L205.20,1499.70 L199.57,1496.45 L199.57,1489.95 Z" fill="#b9aaf3" stroke="#b9aaf3" stroke-width="2.6" stroke-linejoin="round"/><path d="M198.30,1499.10 L203.93,1502.35 L203.93,1508.85 L198.30,1512.10 L192.67,1508.85 L192.67,1502.35 Z" fill="#a08ef5" stroke="#a08ef5" stroke-width="2.6" stroke-linejoin="round"/><path d="M212.30,1499.10 L217.93,1502.35 L217.93,1508.85 L212.30,1512.10 L206.67,1508.85 L206.67,1502.35 Z" fill="#6547ec" stroke="#6547ec" stroke-width="2.6" stroke-linejoin="round"/><circle cx="1134.7" cy="1495.60" r="14.6" fill="#ee3b3b"/><path d="M1131,1491.90 L1138.4,1499.30 M1138.4,1491.90 L1131,1499.30" stroke="#fff" stroke-width="2.6" stroke-linecap="round"/><path d="M205.20,1594.30 L210.83,1597.55 L210.83,1604.05 L205.20,1607.30 L199.57,1604.05 L199.57,1597.55 Z" fill="#b9aaf3" stroke="#b9aaf3" stroke-width="2.6" stroke-linejoin="round"/><path d="M198.30,1606.70 L203.93,1609.95 L203.93,1616.45 L198.30,1619.70 L192.67,1616.45 L192.67,1609.95 Z" fill="#a08ef5" stroke="#a08ef5" stroke-width="2.6" stroke-linejoin="round"/><path d="M212.30,1606.70 L217.93,1609.95 L217.93,1616.45 L212.30,1619.70 L206.67,1616.45 L206.67,1609.95 Z" fill="#6547ec" stroke="#6547ec" stroke-width="2.6" stroke-linejoin="round"/><circle cx="1134.7" cy="1603.20" r="14.6" fill="#ee3b3b"/><path d="M1131,1599.50 L1138.4,1606.90 M1138.4,1599.50 L1131,1606.90" stroke="#fff" stroke-width="2.6" stroke-linecap="round"/><path d="M1,1 L2989,1 M1,0 L1,1674" stroke="#b3b5b7" stroke-width="2"/><path d="M2989,0 L2989,1674 M0,1673 L2990,1673" stroke="#a4a4a4" stroke-width="2"/><path d="M134.5,2 L134.5,1311" stroke="#000020" stroke-width="1"/></svg>
</body></html>
